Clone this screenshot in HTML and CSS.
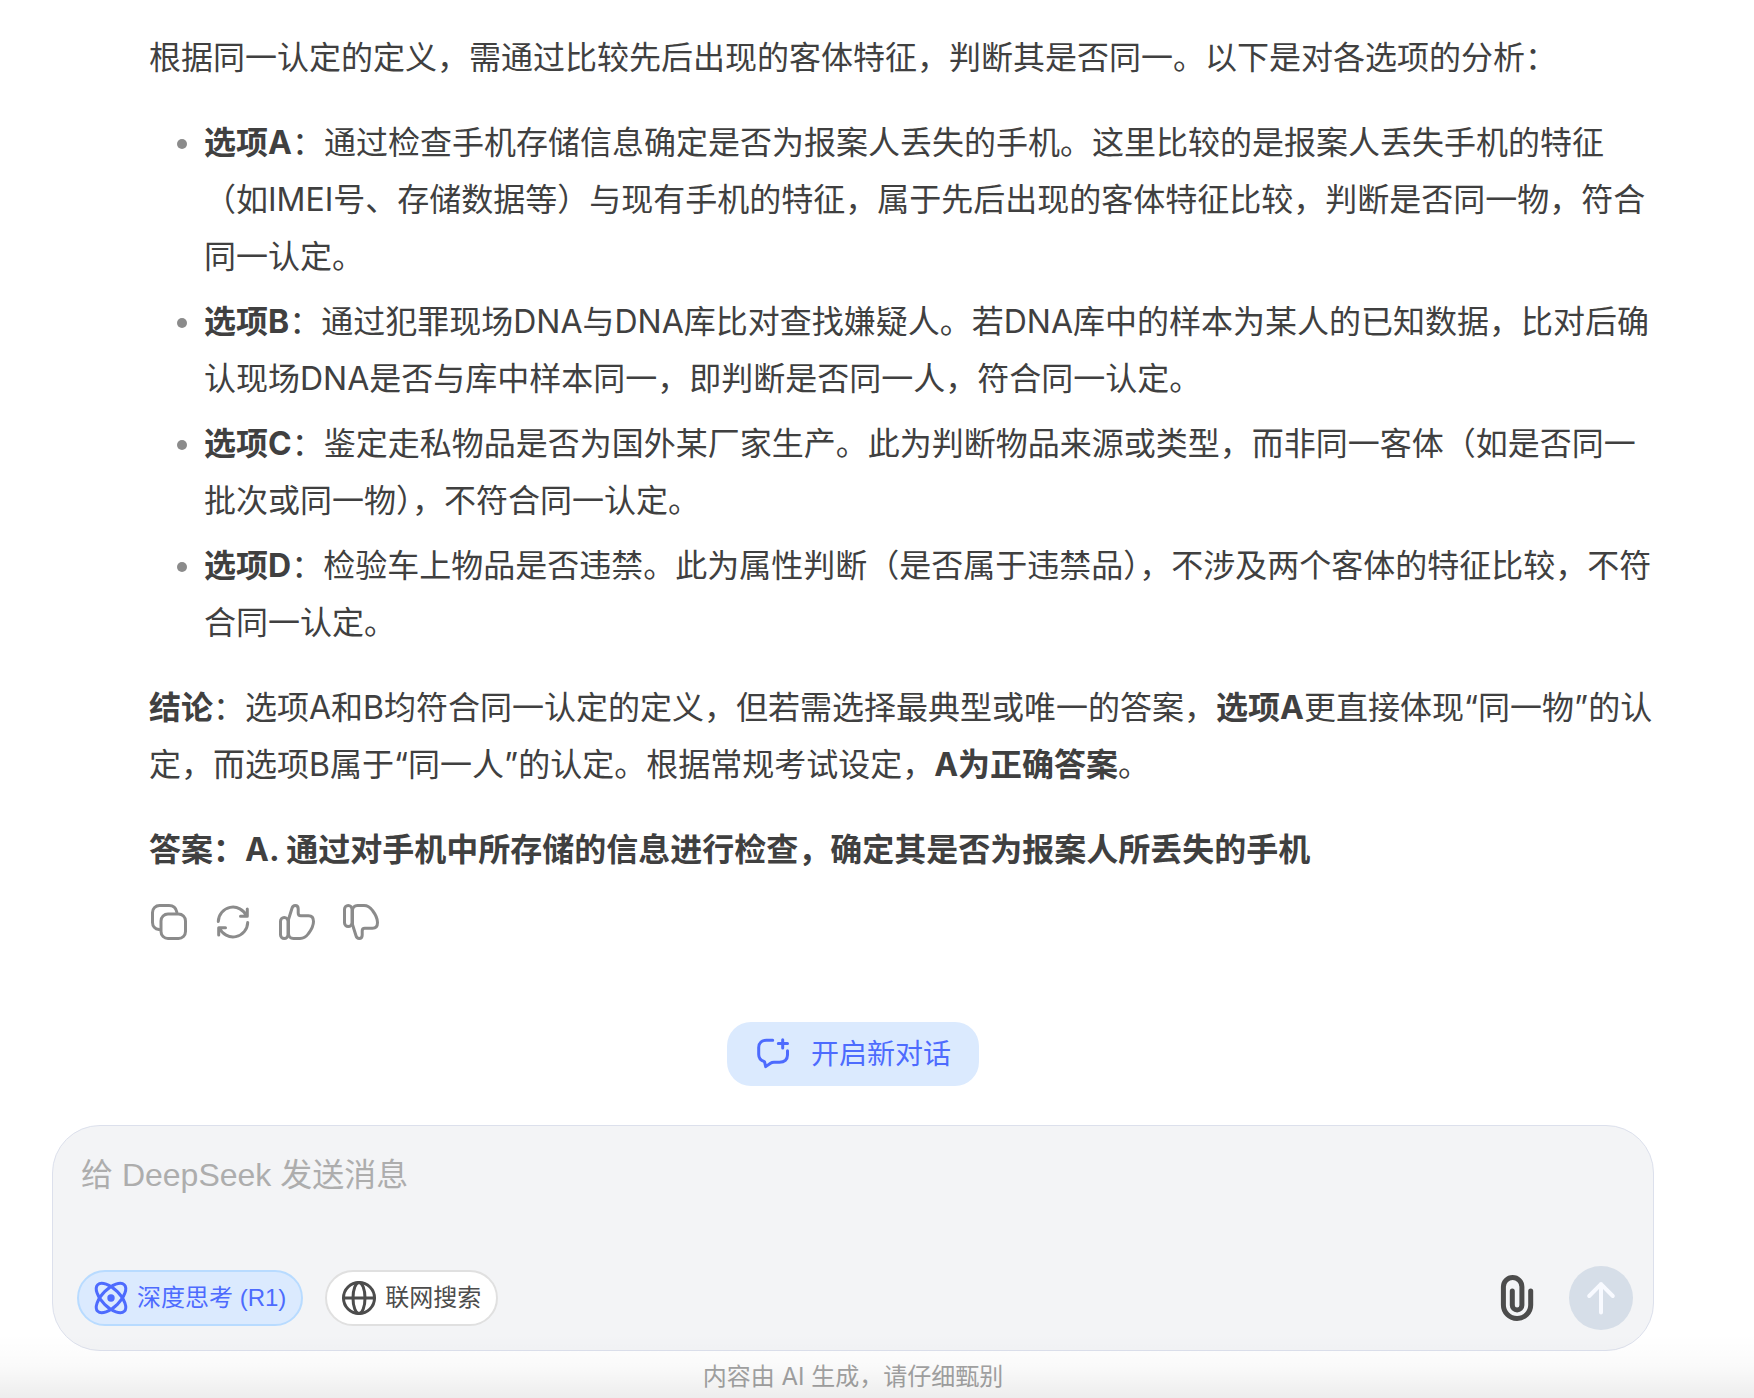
FILE: index.html
```html
<!DOCTYPE html>
<html lang="zh-CN">
<head>
<meta charset="utf-8">
<meta name="viewport" content="width=device-width, initial-scale=1">
<title>DeepSeek</title>
<link rel="stylesheet" href="styles.css">
</head>
<body>
<main class="chat">
  <article class="answer">
    <p>根据同一认定的定义，需通过比较先后出现的客体特征，判断其是否同一。以下是对各选项的分析：</p>
    <ul>
      <li><strong>选项A</strong>：通过检查手机存储信息确定是否为报案人丢失的手机。这里比较的是报案人丢失手机的特征（如IMEI号、存储数据等）与现有手机的特征，属于先后出现的客体特征比较，判断是否同一物，符合同一认定。</li>
      <li><strong>选项B</strong>：通过犯罪现场DNA与DNA库比对查找嫌疑人。若DNA库中的样本为某人的已知数据，比对后确认现场DNA是否与库中样本同一，即判断是否同一人，符合同一认定。</li>
      <li><strong>选项C</strong>：鉴定走私物品是否为国外某厂家生产。此为判断物品来源或类型，而非同一客体（如是否同一批次或同一物），不符合同一认定。</li>
      <li><strong>选项D</strong>：检验车上物品是否违禁。此为属性判断（是否属于违禁品），不涉及两个客体的特征比较，不符合同一认定。</li>
    </ul>
    <p><strong>结论</strong>：选项A和B均符合同一认定的定义，但若需选择最典型或唯一的答案，<strong>选项A</strong>更直接体现“同一物”的认定，而选项B属于“同一人”的认定。根据常规考试设定，<strong>A为正确答案</strong>。</p>
    <p><strong>答案：A. 通过对手机中所存储的信息进行检查，确定其是否为报案人所丢失的手机</strong></p>
  </article>

  <div class="actions">
    <button type="button" aria-label="复制">
      <svg viewBox="0 0 36 36"><rect x="10" y="10" width="24.5" height="24.5" rx="7"/><path d="M8 25.6C4 25 1.5 22 1.5 18.500V8.500a7 7 0 0 1 7-7H18c4 0 7 2.500 7.800 6.500"/></svg>
    </button>
    <button type="button" aria-label="重新生成">
      <svg viewBox="0 0 36 36"><path d="M3.300 17.500A14.700 14.700 0 0 1 31.500 12M32.300 5v7.200h-6.800M32.700 18.500A14.700 14.700 0 0 1 4.500 24M3.700 31v-7.200h6.800"/></svg>
    </button>
    <button type="button" aria-label="喜欢">
      <svg viewBox="0 0 36 36"><rect x="1.500" y="13.500" width="7.500" height="21" rx="3.700"/><path d="M9.500 15.500L13 4.200C13.600 2.300 14.800 1.500 16.200 1.500C18 1.500 19.200 3 19.200 5V9C19.200 10.800 20 11.700 21.800 11.700H29.500C33 11.700 34.500 14 34.500 17.500C34.500 21.500 32.500 25.500 29.500 29.500C27 33 24.500 34.500 21 34.500H14.500C11.500 34.500 9.500 32.500 9.500 29.500Z"/></svg>
    </button>
    <button type="button" aria-label="不喜欢">
      <svg viewBox="0 0 36 36"><g transform="matrix(1 0 0 -1 0 36)"><rect x="1.500" y="13.500" width="7.500" height="21" rx="3.700"/><path d="M9.500 15.500L13 4.200C13.600 2.300 14.800 1.500 16.200 1.500C18 1.500 19.200 3 19.200 5V9C19.200 10.800 20 11.700 21.800 11.700H29.500C33 11.700 34.500 14 34.500 17.500C34.500 21.500 32.500 25.500 29.500 29.500C27 33 24.500 34.500 21 34.500H14.500C11.500 34.500 9.500 32.500 9.500 29.500Z"/></g></svg>
    </button>
  </div>

  <button type="button" class="new-chat">
    <svg viewBox="0 0 32 32"><path d="M15.700 2.200H9.500C5 2.200 1.700 5 1.700 9.500V16.500C1.700 20 3.500 22.500 7.500 23.700L8.700 28.600L13.500 25.200C14.500 24.500 15.500 24.200 17 24.200H22.500C27.500 24.200 30.500 21.500 30.500 17V12.700M25.700 1.700v8.200M21.300 5.500h9.200"/></svg>
    <span>开启新对话</span>
  </button>

  <form class="composer">
    <textarea rows="1" aria-label="给 DeepSeek 发送消息" placeholder="给 DeepSeek 发送消息"></textarea>
    <div class="toolbar">
      <button type="button" class="toggle toggle-on" aria-pressed="true">
        <svg viewBox="0 0 34 34"><ellipse cx="17" cy="17" rx="18.800" ry="9" transform="rotate(45 17 17)"/><ellipse cx="17" cy="17" rx="18.800" ry="9" transform="rotate(-45 17 17)"/><circle class="dot" cx="17" cy="17" r="3.700"/></svg>
        <span>深度思考 (R1)</span>
      </button>
      <button type="button" class="toggle" aria-pressed="false">
        <svg viewBox="0 0 34 34"><circle cx="17" cy="17" r="15.500"/><ellipse cx="17" cy="17" rx="6" ry="15.500"/><path d="M1.500 17h31"/></svg>
        <span>联网搜索</span>
      </button>
      <button type="button" class="attach" aria-label="上传附件">
        <svg viewBox="0 0 32 46"><path d="M29.700 16V30A13.650 13.500 0 0 1 2.400 30V11.700A9.250 9.250 0 0 1 20.900 11.700V30.200A4.800 4.800 0 0 1 11.300 30.200V16"/></svg>
      </button>
      <button type="submit" class="send" aria-label="发送">
        <svg viewBox="0 0 64 64"><path d="M32 46.500V18M20.200 30L32 18.200L43.800 30"/></svg>
      </button>
    </div>
  </form>
  <p class="notice">内容由 AI 生成，请仔细甄别</p>
</main>
</body>
</html>
```

FILE: styles.css
```css
* {
  box-sizing: border-box;
}

body {
  margin: 0;
  background: #fff;
  color: #404040;
  font: 32px/57px Inter, "Noto Sans CJK SC", sans-serif;
}

button,
textarea {
  font: inherit;
  color: inherit;
  border: 0;
  padding: 0;
  background: none;
}

button {
  cursor: pointer;
}

svg {
  display: block;
  flex: none;
  overflow: visible;
  fill: none;
  stroke: currentColor;
  stroke-width: 3px;
  stroke-linecap: round;
  stroke-linejoin: round;
}

.chat {
  position: relative;
  display: flex;
  flex-direction: column;
  min-height: 100vh;
  padding: 29px 100px 0 52px;
}

/* Soft shade along the bottom edge of the window */
.chat::after {
  content: "";
  position: absolute;
  inset: auto 0 0;
  height: 64px;
  background: linear-gradient(rgba(0, 0, 0, 0), rgba(0, 0, 0, 0.02) 50%, rgba(0, 0, 0, 0.07));
  pointer-events: none;
}

.answer {
  display: flex;
  flex-direction: column;
  gap: 28px;
  padding-left: 97px;
}

.answer p,
.answer ul {
  margin: 0;
}

.answer ul {
  display: flex;
  flex-direction: column;
  gap: 8px;
  padding-left: 55px;
}

.answer li::marker {
  color: #8b8b8b;
}

strong {
  font-weight: 700;
}

.actions {
  display: flex;
  gap: 28px;
  padding: 26px 0 82px 99px;
  color: #8b8b8b;
}

.actions svg {
  width: 36px;
  height: 36px;
}

.new-chat {
  display: flex;
  align-items: center;
  align-self: center;
  gap: 22px;
  height: 64px;
  padding: 0 28px 0 30px;
  border-radius: 24px;
  background: #dbeafe;
  color: #4d6bfe;
  font-size: 28px;
}

.new-chat svg {
  width: 32px;
  height: 32px;
}

.composer {
  display: flex;
  flex-direction: column;
  gap: 61px;
  margin-top: 39px;
  padding: 19px 20px 20px 24px;
  border: 1px solid #dce0ec;
  border-radius: 48px;
  background: #f3f4f6;
  font-family: "Liberation Sans", "Noto Sans CJK SC", sans-serif;
}

.composer textarea {
  display: block;
  width: 100%;
  height: 60px;
  padding: 0 4px;
  line-height: 60px;
  resize: none;
  outline: 0;
  overflow: hidden;
}

.composer textarea::placeholder {
  color: #adadad;
  opacity: 1;
}

.toolbar {
  display: flex;
  align-items: center;
  gap: 22px;
}

.toggle {
  display: flex;
  align-items: center;
  gap: 9px;
  height: 56px;
  padding: 0 15px;
  border: 2px solid #e0e0e0;
  border-radius: 28px;
  background: #fff;
  color: #4c4c4c;
  font-size: 24px;
  line-height: 32px;
}

.toggle-on {
  border-color: #b8dbff;
  background: #dbeafe;
  color: #4d6bfe;
}

.toggle svg {
  width: 34px;
  height: 34px;
}

.dot {
  fill: currentColor;
  stroke: none;
}

.attach {
  margin-left: auto;
  margin-right: 14px;
  color: #4c4c4c;
}

.attach svg {
  width: 32px;
  height: 46px;
  stroke-width: 5px;
}

.send {
  border-radius: 50%;
  background: #d6dee8;
  color: #f8faff;
}

.send svg {
  width: 64px;
  height: 64px;
  stroke-width: 4px;
}

.notice {
  margin: 0;
  padding: 10px 0 4px;
  color: #a3a3a3;
  font-size: 24px;
  line-height: 32px;
  text-align: center;
}
```
